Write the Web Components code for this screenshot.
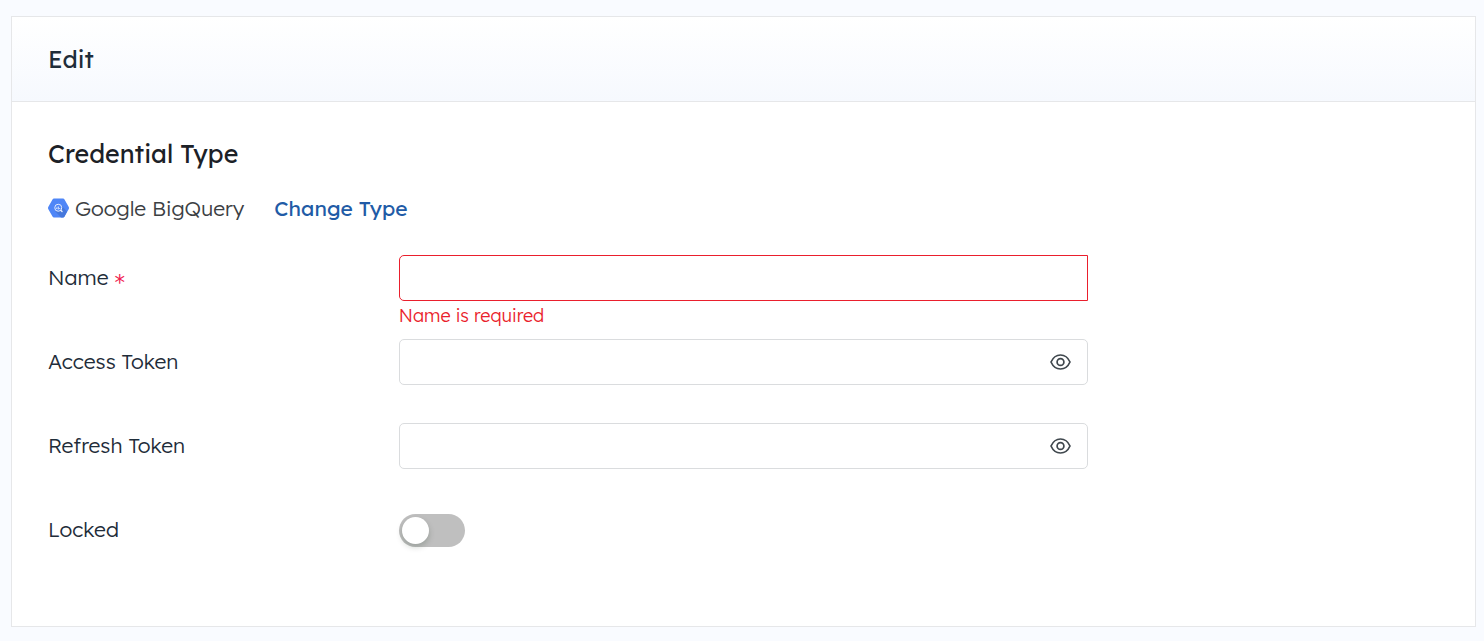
<!DOCTYPE html>
<html lang="en">
<head>
<meta charset="utf-8">
<meta name="viewport" content="width=device-width, initial-scale=1">
<title>Edit</title>
<style>
    :root {
        --text: #1f2d3a;
        --link: #215ba6;
        --error: #ea1f2d;
        --line: #e6e7e9;
        --input-line: #dadcde;
    }
    body {
        margin: 0;
        padding: 16px 8px 14px 11px;
        background: #f9fbff;
        color: var(--text);
        font-family: Lexend, Inter, "Open Sans", sans-serif;
        font-size: 21px;
        font-weight: 300;
        line-height: 32px;
    }
</style>
</head>
<body>
<edit-card heading="Edit">
    <credential-type heading="Credential Type" name="Google BigQuery"></credential-type>
    <text-field label="Name" name="name" required error="Name is required"></text-field>
    <text-field label="Access Token" name="access-token" secret></text-field>
    <text-field label="Refresh Token" name="refresh-token" secret></text-field>
    <switch-field label="Locked" name="locked"></switch-field>
</edit-card>

<script>
/**
 * Layout shared by the field rows
 */
const rowStyle = `
    :host {
        display: grid;
        grid-template-columns: 1fr 2fr 1fr;
        column-gap: 6px;
        align-items: start;
        min-height: 84px;
    }
    label {
        line-height: 44px;
    }
`;

/**
 * Card with a title bar
 */
class EditCard extends HTMLElement {
    constructor() {
        super();

        const shadowRoot = this.attachShadow({ mode: 'open' });
        const template = document.createElement('template');
        template.innerHTML = this.template();
        shadowRoot.appendChild(document.importNode(template.content, true));
        shadowRoot.querySelector('h1').textContent = this.getAttribute('heading');
    }

    template() {
        return `
            <style>
                :host {
                    display: block;
                    background: #fff;
                    border: 1px solid var(--line);
                }
                header {
                    padding: 26px 36px;
                    background: linear-gradient(#fff, #f6f9fe);
                    border-bottom: 1px solid var(--line);
                }
                h1 {
                    margin: 0;
                    font-size: 24px;
                    font-weight: 400;
                    line-height: 32px;
                }
                form {
                    padding: 36px 36px 35px;
                }
            </style>
            <header><h1></h1></header>
            <form><slot></slot></form>
        `;
    }
}

/**
 * Selected credential type and the link that changes it
 */
class CredentialType extends HTMLElement {
    constructor() {
        super();

        const shadowRoot = this.attachShadow({ mode: 'open' });
        const template = document.createElement('template');
        template.innerHTML = this.template();
        shadowRoot.appendChild(document.importNode(template.content, true));
        shadowRoot.querySelector('h2').textContent = this.getAttribute('heading');
        shadowRoot.querySelector('span').textContent = this.getAttribute('name');
    }

    template() {
        return `
            <style>
                :host {
                    display: block;
                    margin-bottom: 31px;
                }
                h2 {
                    margin: 0 0 22px;
                    color: #1c2127;
                    font-size: 25px;
                    font-weight: 400;
                    line-height: 32px;
                }
                div {
                    display: flex;
                    align-items: center;
                }
                svg {
                    width: 21px;
                    height: 20px;
                    margin-right: 6px;
                }
                span {
                    color: #3c4043;
                }
                a {
                    margin-left: 30px;
                    color: var(--link);
                    font-weight: 400;
                    text-decoration: none;
                }
                a:hover {
                    text-decoration: underline;
                }
            </style>
            <h2></h2>
            <div>
                <svg viewBox="0 0 42 40" aria-hidden="true">
                    <path fill="#4f86f7" d="M12 1h18q2 0 3 2l8 14q2 3 0 6l-8 14q-1 2-3 2H12q-2 0-3-2L1 23q-2-3 0-6L9 3q1-2 3-2z"/>
                    <path fill="#4678dc" d="M27 15l11 12-5 10q-1 2-3 2h-4L14 26l6-9z"/>
                    <circle cx="20.500" cy="19.500" r="7" fill="#4f86f7" stroke="#e4ecfe" stroke-width="2"/>
                    <path fill="none" stroke="#e4ecfe" stroke-width="2" d="M17.500 19v3M20.500 17v6M23.500 20v2"/>
                    <path stroke="#e4ecfe" stroke-width="3" stroke-linecap="round" d="M26 25l2 2"/>
                </svg>
                <span></span>
                <a href="#change-type">Change Type</a>
            </div>
        `;
    }
}

/**
 * Text box row. "secret" hides the value behind an eye button
 */
class TextField extends HTMLElement {
    constructor() {
        super();

        const shadowRoot = this.attachShadow({ mode: 'open' });
        const template = document.createElement('template');
        template.innerHTML = this.template();
        shadowRoot.appendChild(document.importNode(template.content, true));

        this.input = shadowRoot.querySelector('input');
        this.input.name = this.getAttribute('name');
        shadowRoot.querySelector('.text').textContent = this.getAttribute('label');

        const required = this.hasAttribute('required');
        this.input.required = required;
        shadowRoot.querySelector('.mark').hidden = !required;

        const error = shadowRoot.querySelector('.error');
        error.textContent = this.getAttribute('error');
        error.hidden = !this.hasAttribute('error');

        const button = shadowRoot.querySelector('button');
        button.hidden = !this.hasAttribute('secret');
        if (this.hasAttribute('secret')) {
            this.input.type = 'password';
            button.onclick = () => { this.ToggleValue(); };
        }
    }

    template() {
        return `
            <style>
                ${rowStyle}
                [hidden] {
                    display: none !important;
                }
                .mark {
                    color: #f0204e;
                    font-family: "DejaVu Sans", sans-serif;
                    font-weight: 400;
                    line-height: 1;
                    vertical-align: sub;
                }
                .box {
                    display: flex;
                    box-sizing: border-box;
                    height: 46px;
                    background: #fff;
                    border: 1px solid var(--input-line);
                    border-radius: 5px;
                }
                :host([error]) .box {
                    border-color: var(--error);
                    border-radius: 5px 0 0 5px;
                }
                input {
                    flex: 1;
                    min-width: 0;
                    padding: 0 14px;
                    background: none;
                    border: 0;
                    outline: 0;
                    color: inherit;
                    font: inherit;
                }
                button {
                    display: flex;
                    align-items: center;
                    padding: 0 16px;
                    background: none;
                    border: 0;
                    color: #3f474d;
                    cursor: pointer;
                }
                svg {
                    width: 21px;
                    height: 16px;
                }
                .error {
                    margin: 0;
                    color: var(--error);
                    font-size: 18px;
                    line-height: 30px;
                }
            </style>
            <label for="field"><span class="text"></span> <span class="mark">*</span></label>
            <div>
                <div class="box">
                    <input id="field" type="text" autocomplete="off">
                    <button type="button" aria-label="Show value">
                        <svg viewBox="0 0 21 16" fill="none" stroke="currentColor" stroke-width="1.700" aria-hidden="true">
                            <path d="M1 8C3 3.500 6.500 1 10.500 1S18 3.500 20 8c-2 4.500-5.500 7-9.500 7S3 12.500 1 8z"/>
                            <circle cx="10.500" cy="8" r="3.400"/>
                        </svg>
                    </button>
                </div>
                <p class="error"></p>
            </div>
        `;
    }

    /**
     * Show or hide the typed value
     */
    ToggleValue() {
        this.input.type = this.input.type === 'password' ? 'text' : 'password';
    }
}

/**
 * On/off switch row
 */
class SwitchField extends HTMLElement {
    constructor() {
        super();

        const shadowRoot = this.attachShadow({ mode: 'open' });
        const template = document.createElement('template');
        template.innerHTML = this.template();
        shadowRoot.appendChild(document.importNode(template.content, true));
        shadowRoot.querySelector('label').textContent = this.getAttribute('label');
        shadowRoot.querySelector('input').name = this.getAttribute('name');
    }

    template() {
        return `
            <style>
                ${rowStyle}
                div {
                    display: flex;
                    align-items: center;
                    height: 46px;
                }
                input {
                    appearance: none;
                    display: flex;
                    box-sizing: border-box;
                    width: 66px;
                    height: 33px;
                    margin: 0;
                    padding: 3px;
                    background: #bfbfbf;
                    border-radius: 17px;
                    cursor: pointer;
                }
                input::before {
                    content: "";
                    width: 27px;
                    height: 27px;
                    background: #fff;
                    border-radius: 50%;
                    box-shadow: 0 3px 6px rgba(0, 35, 11, 0.2);
                }
                input:checked {
                    justify-content: flex-end;
                    background: var(--link);
                }
            </style>
            <label for="switch"></label>
            <div><input id="switch" type="checkbox" role="switch"></div>
        `;
    }
}

customElements.define('edit-card', EditCard);
customElements.define('credential-type', CredentialType);
customElements.define('text-field', TextField);
customElements.define('switch-field', SwitchField);
</script>
</body>
</html>
